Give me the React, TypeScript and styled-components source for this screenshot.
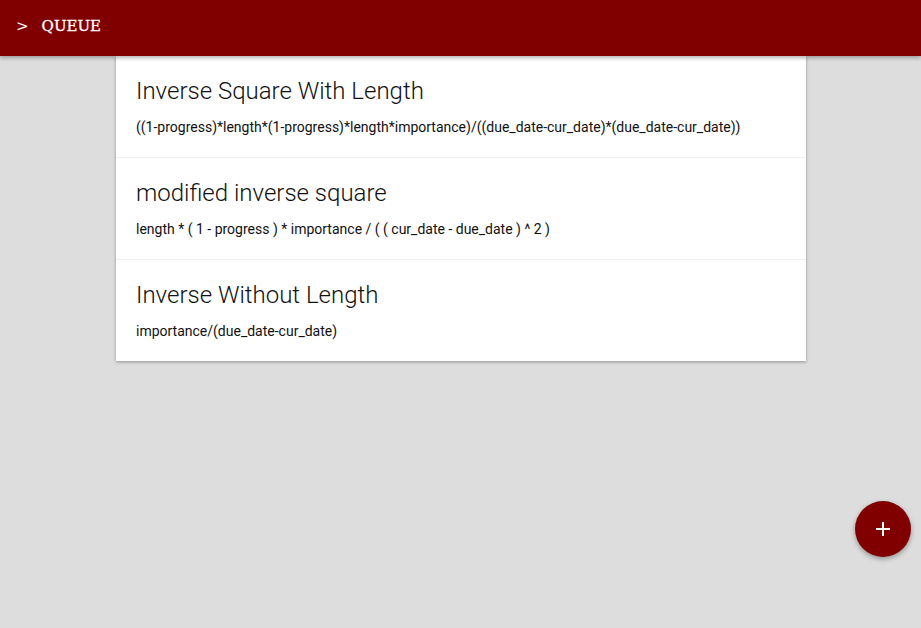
import React from "react";
import styled, { createGlobalStyle } from "styled-components";

const Global = createGlobalStyle`
  html, body { margin: 0; padding: 0; background: #dddddd; }
  body { font-family: Roboto, "Liberation Sans", sans-serif; min-height: 628px; }
`;

const Page = styled.div`
  min-height: 628px;
  background: #dddddd;
  display: flex;
  flex-direction: column;
`;

const Header = styled.header`
  height: 56px;
  box-sizing: border-box;
  padding: 0 0 4px 16px;
  background: #800000;
  color: #ffffff;
  display: flex;
  align-items: center;
  gap: 13px;
  font-family: "DejaVu Serif", "Liberation Serif", serif;
  font-size: 15px;
  box-shadow: 0 2px 4px rgba(0, 0, 0, 0.3);
  position: relative;
  z-index: 2;
`;

const Chevron = styled.span`
  font-size: 15px;
`;

const Brand = styled.span`
  letter-spacing: 0;
  -webkit-text-stroke: 0.3px #ffffff;
`;

const List = styled.main`
  width: 690px;
  margin-left: 116px;
  background: #ffffff;
  box-shadow: 0 1px 3px rgba(0, 0, 0, 0.35);
  display: flex;
  flex-direction: column;
`;

const Item = styled.section<{ $last?: boolean }>`
  height: ${(p) => (p.$last ? "101px" : "102px")};
  box-sizing: border-box;
  padding: 20px 20px 0 20px;
  border-bottom: ${(p) => (p.$last ? "none" : "1px solid #efefef")};
`;

const Title = styled.h2`
  margin: 0;
  font-weight: 300;
  font-size: 24px;
  line-height: 31px;
  color: #111111;
`;

const Formula = styled.p`
  margin: 11px 0 0;
  font-size: 14px;
  line-height: 18px;
  color: #111111;
`;

const Fab = styled.button`
  position: fixed;
  left: 855px;
  top: 501px;
  width: 56px;
  height: 56px;
  border-radius: 50%;
  border: none;
  background: #800000;
  box-shadow: 0 2px 5px rgba(0, 0, 0, 0.35);
  display: flex;
  align-items: center;
  justify-content: center;
  padding: 0;
`;

const items = [
  {
    title: "Inverse Square With Length",
    formula:
      "((1-progress)*length*(1-progress)*length*importance)/((due_date-cur_date)*(due_date-cur_date))",
  },
  {
    title: "modified inverse square",
    formula:
      "length * ( 1 - progress ) * importance / ( ( cur_date - due_date ) ^ 2 )",
  },
  {
    title: "Inverse Without Length",
    formula: "importance/(due_date-cur_date)",
  },
];

export default function App() {
  return (
    <Page>
      <Global />
      <Header>
        <Chevron>&gt;</Chevron>
        <Brand>QUEUE</Brand>
      </Header>
      <List>
        {items.map((it, i) => (
          <Item key={i} $last={i === items.length - 1}>
            <Title>{it.title}</Title>
            <Formula>{it.formula}</Formula>
          </Item>
        ))}
      </List>
      <Fab aria-label="add">
        <svg width="14" height="14" viewBox="0 0 14 14">
          <path d="M7 0v14M0 7h14" stroke="#fff" strokeWidth="2" />
        </svg>
      </Fab>
    </Page>
  );
}
